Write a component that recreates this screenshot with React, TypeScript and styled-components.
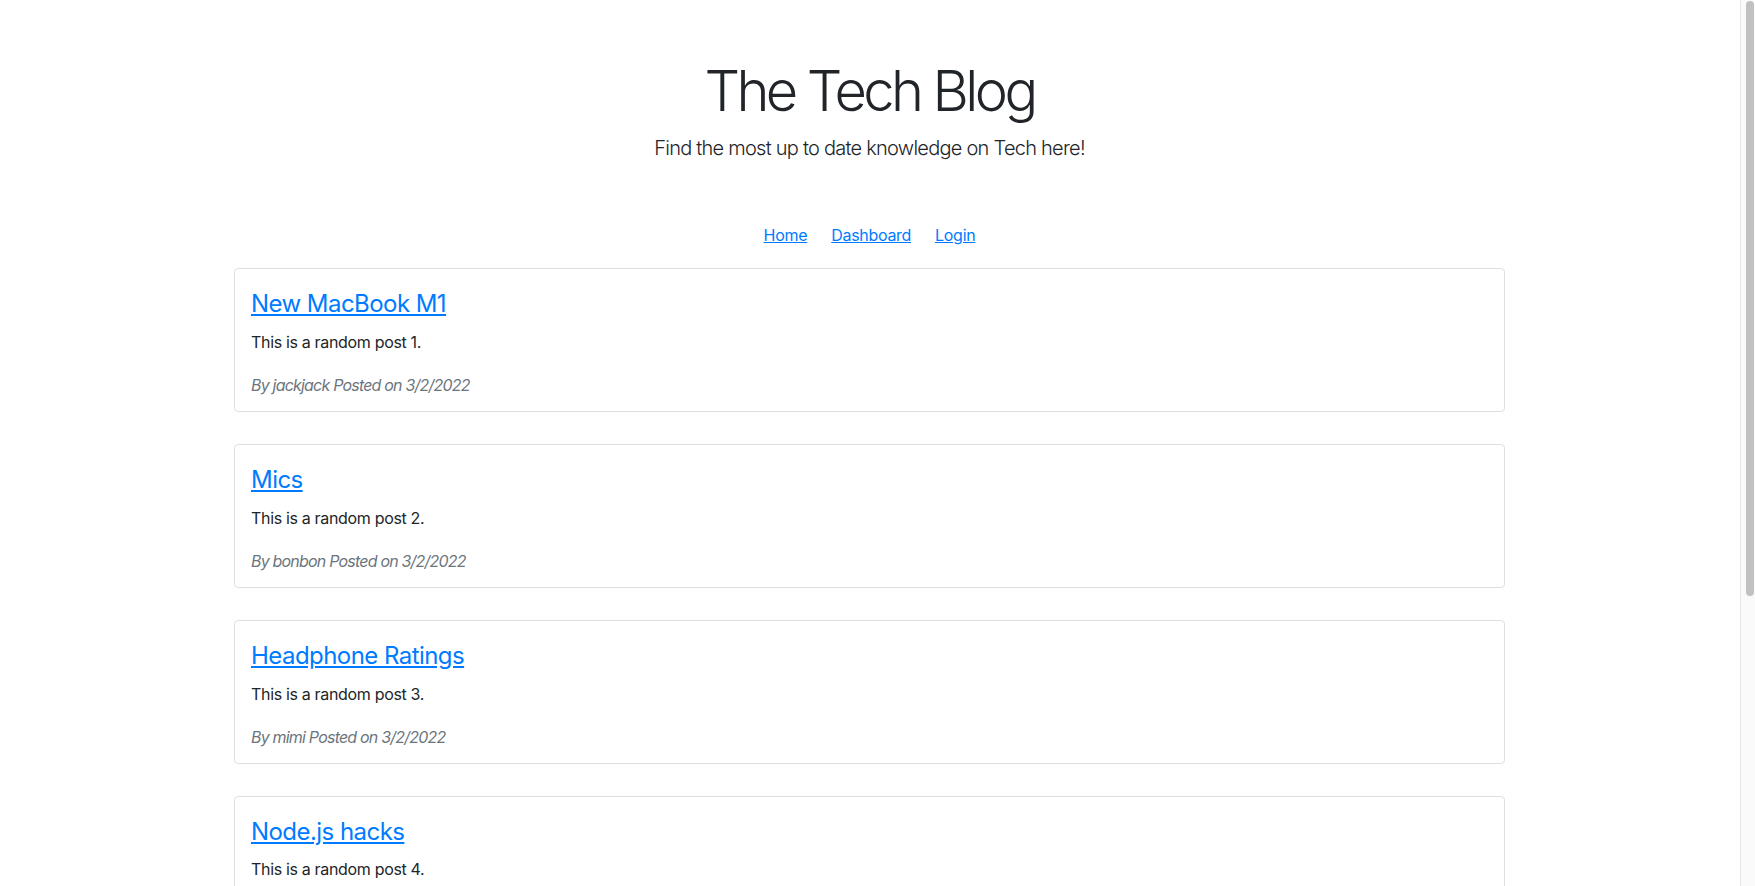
import React, { FC } from "react";
import styled, { createGlobalStyle } from "styled-components";

const GlobalStyle = createGlobalStyle`
    body {
        margin: 0;
        background: #fff;
        color: #212529;
        font-family: Inter, "Noto Sans", "Liberation Sans", sans-serif;
        font-size: 16px;
        line-height: 1.5;
    }
`;

const posts = [
    { id: 1, title: "New MacBook M1", body: "This is a random post 1.", author: "jackjack", date: "3/2/2022" },
    { id: 2, title: "Mics", body: "This is a random post 2.", author: "bonbon", date: "3/2/2022" },
    { id: 3, title: "Headphone Ratings", body: "This is a random post 3.", author: "mimi", date: "3/2/2022" },
    { id: 4, title: "Node.js hacks", body: "This is a random post 4.", author: "jackjack", date: "3/2/2022" }
];

// page area left of the browser scrollbar
const Page = styled.div`
    padding-right: 16px;
`;

const Header = styled.header`
    display: flex;
    flex-direction: column;
    align-items: center;
    padding-top: 58px;
`;

const Title = styled.h1`
    margin: 0 0 8px;
    font-size: 56px;
    font-weight: 300;
    line-height: 1.2;
    letter-spacing: -3.6px;
    color: #212529;
`;

const Lead = styled.p`
    margin: 0;
    font-size: 20px;
    font-weight: 300;
    line-height: 1.5;
    letter-spacing: -0.75px;
`;

const Nav = styled.nav`
    display: flex;
    justify-content: center;
    gap: 24px;
    margin: 60px 0 21px;
`;

const NavLink = styled.a`
    color: #007bff;
    text-decoration: underline;
    font-size: 16px;
    line-height: 24px;
    letter-spacing: -0.3px;
`;

const Feed = styled.main`
    width: 1271px;
    margin: 0 auto;
`;

const Card = styled.article`
    border: 1px solid #dfdfdf;
    border-radius: 4px;
    padding: 21px 16px 14px;
    margin-bottom: 32px;
`;

const PostTitle = styled.a`
    display: inline-block;
    color: #007bff;
    font-size: 24px;
    line-height: 1.2;
    letter-spacing: -0.55px;
    text-decoration: underline;
    margin-bottom: 11px;
`;

const PostBody = styled.p`
    margin: 0 0 19px;
    color: #212529;
    letter-spacing: -0.33px;
`;

const PostMeta = styled.p`
    margin: 0;
    font-style: italic;
    color: #6c757d;
    letter-spacing: -0.8px;
`;

const ScrollTrack = styled.div`
    position: fixed;
    top: 0;
    right: 0;
    bottom: 0;
    width: 13px;
    display: flex;
    justify-content: flex-end;
    padding: 1px 1px 0 0;
    background: #fafafa;
    border-left: 1px solid #e8e8e8;
`;

const ScrollThumb = styled.div`
    width: 8px;
    height: 595px;
    border-radius: 4px;
    background: #c1c1c1;
`;

export const App: FC = () => (
    <React.Fragment>
        <GlobalStyle />
        <Page>
            <Header>
                <Title>The Tech Blog</Title>
                <Lead>Find the most up to date knowledge on Tech here!</Lead>
            </Header>
            <Nav>
                <NavLink href="#">Home</NavLink>
                <NavLink href="#">Dashboard</NavLink>
                <NavLink href="#">Login</NavLink>
            </Nav>
            <Feed>
                {posts.map(post => (
                    <Card key={post.id}>
                        <div>
                            <PostTitle href="#">{post.title}</PostTitle>
                        </div>
                        <PostBody>{post.body}</PostBody>
                        <PostMeta>
                            By {post.author} Posted on {post.date}
                        </PostMeta>
                    </Card>
                ))}
            </Feed>
        </Page>
        <ScrollTrack>
            <ScrollThumb />
        </ScrollTrack>
    </React.Fragment>
);

export default App;
